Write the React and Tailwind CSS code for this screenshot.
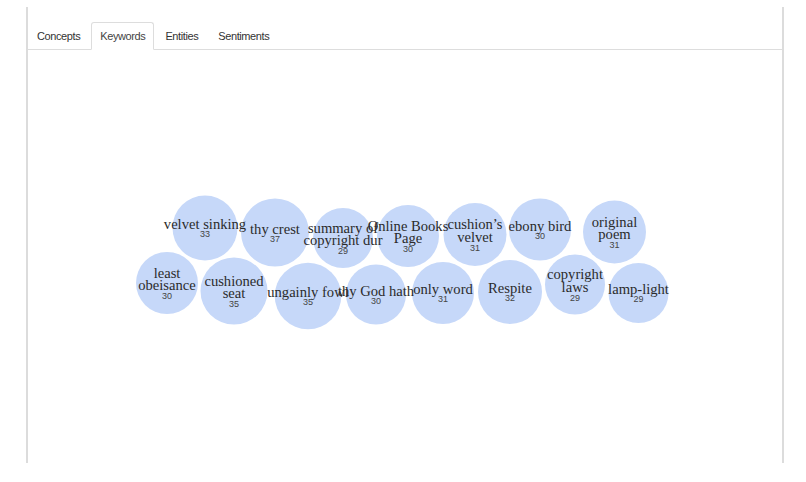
const tabs = ['Concepts', 'Keywords', 'Entities', 'Sentiments'];

const bubbles = [
  { cx: 205, cy: 228, r: 32.5, lines: ['velvet sinking'], v: 33 },
  { cx: 275, cy: 232.5, r: 34, lines: ['thy crest'], v: 37 },
  { cx: 343, cy: 238, r: 30, lines: ['summary of', 'copyright dur'], v: 29 },
  { cx: 408, cy: 236, r: 31, lines: ['Online Books', 'Page'], v: 30 },
  { cx: 475, cy: 234.5, r: 31.5, lines: ['cushion’s', 'velvet'], v: 31 },
  { cx: 540, cy: 229.5, r: 31, lines: ['ebony bird'], v: 30 },
  { cx: 614.5, cy: 232, r: 31.5, lines: ['original', 'poem'], v: 31 },
  { cx: 167, cy: 283, r: 31, lines: ['least', 'obeisance'], v: 30 },
  { cx: 234, cy: 291, r: 33.5, lines: ['cushioned', 'seat'], v: 35 },
  { cx: 308, cy: 296, r: 33.3, lines: ['ungainly fowl'], v: 35 },
  { cx: 376, cy: 294.5, r: 30, lines: ['thy God hath'], v: 30 },
  { cx: 443, cy: 293, r: 31, lines: ['only word'], v: 31 },
  { cx: 510, cy: 292, r: 32, lines: ['Respite'], v: 32 },
  { cx: 575, cy: 284.5, r: 30, lines: ['copyright', 'laws'], v: 29 },
  { cx: 638.5, cy: 293, r: 30, lines: ['lamp-light'], v: 29 },
];

const BubbleChart = () => (
  <svg className="block w-full h-full" viewBox="28 50 754 413" preserveAspectRatio="xMinYMin meet">
    {bubbles.map((b, i) => (
      <circle key={i} cx={b.cx} cy={b.cy} r={b.r} fill="#c6d8f9" />
    ))}
    {bubbles.map((b, i) => {
      const two = b.lines.length > 1;
      const ys = two ? [b.cy - 10.3, b.cy + 2.2] : [b.cy - 3.8];
      const ny = two ? b.cy + 13 : b.cy + 6.3;
      return (
        <g key={i} textAnchor="middle" dominantBaseline="central">
          {b.lines.map((l, j) => (
            <text
              key={j}
              x={b.cx}
              y={ys[j]}
              fill="#2b2b2b"
              style={{ fontFamily: '"Liberation Serif", serif', fontSize: '14.6px' }}
            >
              {l}
            </text>
          ))}
          <text
            x={b.cx}
            y={ny}
            fill="#444"
            style={{ fontFamily: '"Liberation Sans", Arial, sans-serif', fontSize: '9px' }}
          >
            {b.v}
          </text>
        </g>
      );
    })}
  </svg>
);

export default function App() {
  return (
    <div className="w-[806px] h-[482px] bg-white pt-[7px] pl-[26px] font-['Liberation_Sans',Arial,sans-serif]">
      <div className="w-[758px] h-[456px] border-x-2 border-[#dcdcdc] flex flex-col">
        <div className="pt-[15px] flex items-end border-b border-[#dddddd]">
          {tabs.map((t) => (
            <div
              key={t}
              className={
                t === 'Keywords'
                  ? 'mr-[2px] -mb-px h-[28px] px-[8px] flex items-center text-[11px] tracking-[-0.4px] text-[#444] bg-white border border-[#dddddd] border-b-white rounded-t-[3px]'
                  : 'mr-[2px] -mb-px h-[28px] px-[8px] flex items-center text-[11px] tracking-[-0.4px] text-[#333] border border-transparent'
              }
            >
              {t}
            </div>
          ))}
        </div>
        <div className="flex-1">
          <BubbleChart />
        </div>
      </div>
    </div>
  );
}
